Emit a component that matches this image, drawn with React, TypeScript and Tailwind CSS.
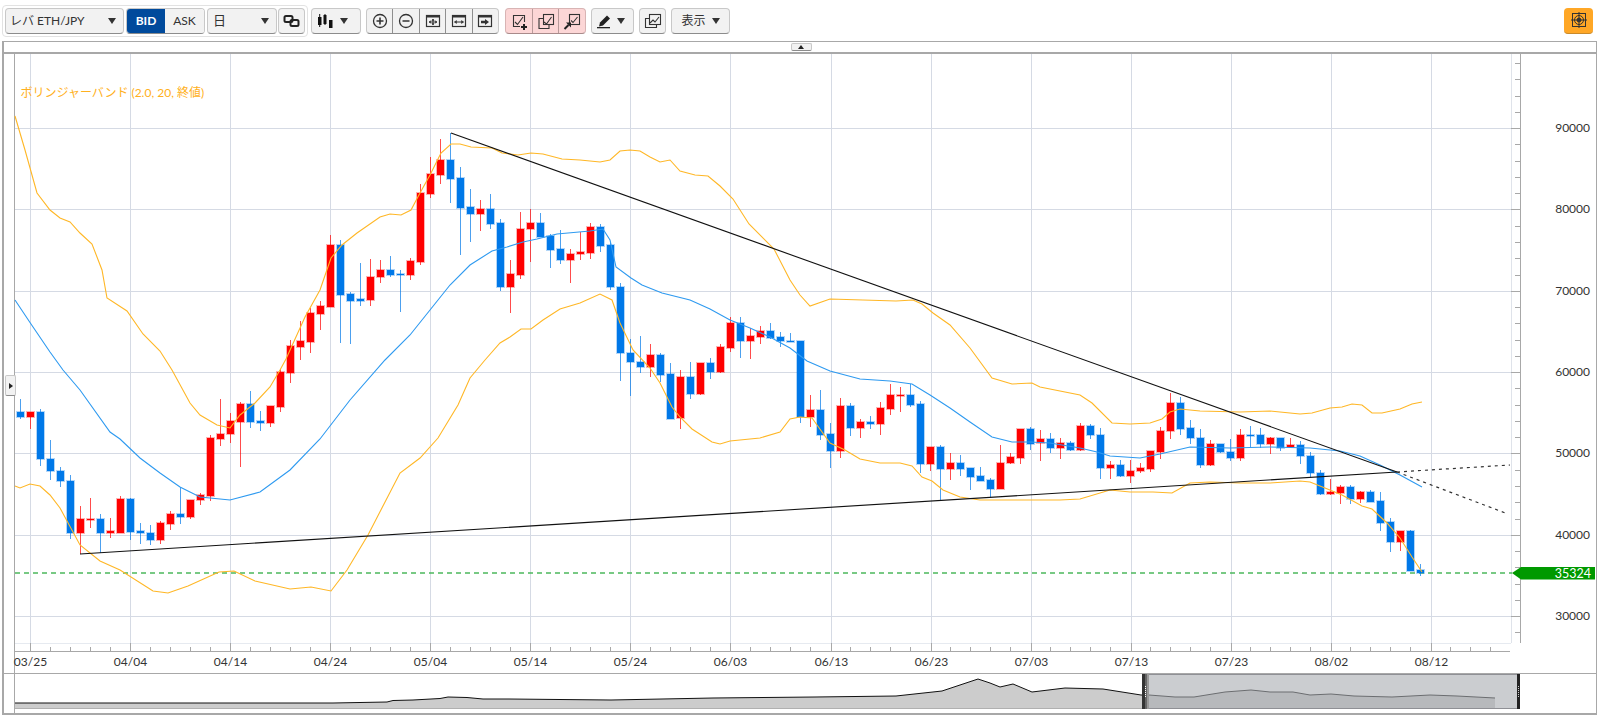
import React from 'react';

const FONT = { fontFamily: 'Lato, "Noto Sans CJK JP", sans-serif' };

// [wickTop, wickBottom, bodyTop, bodyBottom, red?] - one per day, 10px apart, starts at x=20
const candles: [number, number, number, number, number][] = [
  [399, 419, 412, 417, 0], [412, 429, 412, 417, 1], [409, 466, 412, 459, 0], [440, 480, 459, 471, 0],
  [467, 487, 471, 481, 0], [475, 539, 481, 533, 0], [506, 554, 519, 533, 1], [498, 528, 519, 520, 1],
  [514, 553, 519, 533, 0], [518, 538, 531, 533, 1], [496, 533, 499, 533, 1], [498, 540, 499, 532, 0],
  [523, 544, 531, 533, 0], [525, 545, 533, 540, 0], [521, 544, 523, 540, 1], [511, 530, 514, 524, 1],
  [487, 524, 514, 517, 0], [500, 519, 500, 517, 1], [493, 505, 495, 500, 1], [435, 501, 438, 496, 1],
  [399, 446, 434, 439, 1], [413, 443, 421, 434, 1], [402, 467, 404, 422, 1], [391, 428, 404, 422, 0],
  [411, 431, 421, 423, 0], [406, 427, 406, 423, 1], [369, 412, 372, 407, 1], [340, 383, 346, 373, 1],
  [321, 360, 341, 347, 1], [308, 353, 313, 342, 1], [301, 330, 306, 314, 1], [235, 307, 245, 307, 1],
  [240, 343, 245, 295, 0], [292, 344, 294, 301, 0], [263, 306, 299, 301, 0], [259, 306, 277, 300, 1],
  [260, 283, 270, 277, 1], [256, 277, 270, 275, 0], [270, 312, 274, 275, 0], [258, 280, 261, 275, 1],
  [184, 265, 193, 262, 1], [157, 198, 174, 194, 1], [139, 184, 160, 175, 1], [133, 203, 160, 179, 0],
  [167, 255, 178, 208, 0], [189, 242, 207, 214, 0], [200, 231, 209, 214, 1], [194, 229, 209, 224, 0],
  [219, 291, 223, 287, 0], [260, 313, 274, 287, 1], [212, 279, 229, 275, 1], [209, 262, 223, 229, 1],
  [213, 237, 223, 237, 0], [234, 268, 236, 250, 0], [230, 264, 249, 260, 0], [249, 283, 254, 260, 1],
  [232, 260, 252, 254, 1], [223, 259, 227, 253, 1], [224, 252, 227, 246, 0], [243, 290, 245, 287, 0],
  [283, 381, 287, 353, 0], [339, 396, 353, 362, 0], [336, 373, 362, 367, 0], [344, 377, 355, 367, 1],
  [353, 382, 355, 375, 0], [363, 419, 374, 419, 0], [370, 429, 377, 418, 1], [362, 399, 377, 394, 0],
  [363, 395, 363, 394, 1], [358, 379, 363, 372, 0], [344, 373, 347, 372, 1], [317, 352, 323, 348, 1],
  [317, 358, 323, 341, 0], [328, 359, 336, 341, 1], [326, 344, 331, 337, 1], [323, 339, 331, 338, 0],
  [332, 347, 337, 341, 0], [333, 342, 341, 342, 0], [341, 423, 341, 417, 0], [395, 427, 410, 417, 1],
  [390, 440, 410, 435, 0], [423, 468, 434, 451, 0], [398, 458, 406, 451, 1], [403, 436, 406, 428, 0],
  [419, 438, 422, 428, 1], [416, 429, 422, 424, 0], [402, 435, 408, 424, 1], [384, 415, 395, 409, 1],
  [387, 412, 395, 396, 1], [384, 407, 395, 405, 0], [401, 473, 404, 464, 0], [447, 471, 447, 464, 1],
  [445, 500, 447, 469, 0], [453, 480, 463, 469, 1], [455, 476, 463, 469, 0], [468, 490, 468, 477, 0],
  [467, 481, 476, 481, 0], [478, 497, 480, 489, 0], [445, 489, 463, 489, 1], [453, 464, 457, 463, 1],
  [429, 464, 429, 458, 1], [427, 450, 429, 444, 0], [430, 461, 439, 443, 1], [433, 453, 439, 448, 0],
  [438, 459, 443, 448, 1], [441, 451, 443, 450, 0], [423, 451, 426, 450, 1], [424, 439, 426, 435, 0],
  [428, 479, 435, 468, 0], [461, 479, 465, 468, 1], [460, 477, 465, 476, 0], [460, 483, 471, 476, 1],
  [463, 473, 468, 471, 1], [451, 472, 451, 469, 1], [427, 459, 431, 452, 1], [393, 439, 403, 431, 1],
  [397, 435, 403, 429, 0], [420, 444, 428, 438, 0], [429, 468, 438, 465, 0], [440, 466, 444, 465, 1],
  [444, 453, 444, 452, 0], [439, 461, 452, 458, 0], [429, 461, 435, 458, 1], [426, 448, 435, 436, 0],
  [428, 448, 435, 444, 0], [437, 454, 438, 444, 1], [438, 451, 438, 448, 0], [438, 448, 445, 447, 1],
  [441, 464, 445, 456, 0], [452, 477, 456, 473, 0], [470, 495, 473, 494, 0], [479, 495, 492, 494, 1],
  [485, 504, 487, 493, 1], [485, 504, 487, 499, 0], [491, 503, 492, 499, 1], [490, 502, 492, 502, 0],
  [492, 531, 501, 523, 0], [518, 552, 522, 542, 0], [531, 551, 531, 542, 1], [530, 571, 531, 571, 0],
  [564, 576, 570, 573, 0],
];

const upperBand = '15,116 25,150 37,193 50,210 60,218 70,222 80,233 92,244 102,270 107,298 127,311 143,334 160,351 172,370 190,403 200,415 217,425 230,428 240,415 255,403 270,387 280,370 286,359 305,317 320,290 331,258 342,245 357,233 380,217 390,214 401,215 411,210 420,193 430,175 441,153 451,144 460,144 471,147 492,148 502,153 518,155 531,153 543,154 562,159 580,160 600,162 610,160 620,151 630,150 640,151 650,157 660,162 670,160 680,171 695,175 708,176 720,186 733,199 749,224 774,249 790,280 800,295 810,306 830,299 896,301 913,300 922,304 933,313 950,325 970,348 992,378 1012,384 1032,383 1040,387 1080,395 1092,403 1112,423 1130,424 1150,423 1162,419 1170,412 1180,409 1200,411 1240,412 1270,411 1280,412 1300,414 1312,413 1330,408 1342,407 1352,404 1362,405 1372,413 1382,413 1400,409 1412,404 1422,402';
const middleBand = '15,300 31,324 50,352 63,370 80,390 110,432 120,439 140,458 160,473 180,487 200,497 230,500 260,492 290,470 320,439 350,400 385,360 410,335 430,310 450,285 470,265 492,251 507,247 523,242 537,239 557,234 590,231 603,229 610,240 616,267 631,278 642,285 662,293 690,300 710,309 730,320 750,328 770,337 790,348 807,361 830,371 860,379 890,381 912,384 930,395 950,408 970,422 992,437 1012,442 1030,442 1050,443 1080,448 1097,452 1110,456 1140,458 1160,454 1190,447 1230,448 1270,447 1310,448 1340,451 1360,456 1380,465 1400,475 1422,487';
const lowerBand = '15,486 20,488 30,484 40,486 50,495 60,508 80,545 100,561 120,570 153,591 168,593 188,586 219,572 234,571 255,581 290,589 311,587 331,591 347,570 368,535 400,473 420,458 438,438 458,405 470,378 485,360 500,343 510,337 521,329 531,329 543,320 560,309 580,303 600,294 612,300 620,323 633,350 650,368 660,383 672,407 680,417 692,429 712,442 720,444 730,441 760,438 780,432 790,419 800,417 812,418 830,443 845,450 860,459 880,463 900,463 912,466 922,477 932,481 943,490 960,497 980,500 1020,500 1060,500 1080,499 1110,490 1130,492 1153,492 1172,493 1190,483 1210,482 1240,483 1270,483 1300,481 1310,482 1325,488 1342,495 1362,506 1372,509 1387,523 1400,538 1412,557 1422,572';

const navLine = '15,703 333,703 387,702 393,700.5 413,700 440,698.5 448,697 467,697.5 483,699 509,699 611,700 713,698 815,697 896,696 942,691 960,685 978,679 990,683 1000,687 1013,684 1032,692 1065,688 1103,689 1141,695 1149,695 1175,697 1194,697 1225,692 1251,690 1270,692 1293,692 1310,695 1331,694 1354,696 1392,697 1430,695 1457,696 1495,698';

const gridX = [30.5, 130.5, 230.5, 330.5, 430.5, 530.5, 630.5, 730.5, 831.5, 931.5, 1031.5, 1131.5, 1231.5, 1331.5, 1431.5];
const dateLabels = ['03/25', '04/04', '04/14', '04/24', '05/04', '05/14', '05/24', '06/03', '06/13', '06/23', '07/03', '07/13', '07/23', '08/02', '08/12'];
const prices = [
  { y: 128.5, label: '90000' }, { y: 209.5, label: '80000' }, { y: 291.5, label: '70000' },
  { y: 372.5, label: '60000' }, { y: 453.5, label: '50000' }, { y: 535.5, label: '40000' }, { y: 616.5, label: '30000' },
];

const Caret = ({ className = '' }: { className?: string }) => (
  <span className={`w-0 h-0 border-x-[4px] border-x-transparent border-t-[6px] border-t-[#333] ${className}`} />
);

const ICON = { width: 20, height: 20, viewBox: '0 0 20 20', fill: 'none', stroke: '#333' };

const PlusCircle = () => (
  <svg {...ICON} strokeWidth={1.3}><circle cx="10" cy="10" r="6.5" /><path d="M6.5 10h7M10 6.5v7" strokeWidth={1.6} /></svg>
);
const MinusCircle = () => (
  <svg {...ICON} strokeWidth={1.3}><circle cx="10" cy="10" r="6.5" /><path d="M6.5 10h7" strokeWidth={1.6} /></svg>
);
const WindowFrame = ({ children }: { children: React.ReactNode }) => (
  <svg {...ICON} strokeWidth={1.2}>
    <rect x="3.5" y="4.5" width="13" height="11" />
    <rect x="3" y="4" width="14" height="2.5" fill="#333" stroke="none" />
    {children}
  </svg>
);
const ChartBox = ({ children }: { children?: React.ReactNode }) => (
  <svg {...ICON} strokeWidth={1.1}>
    {children}
  </svg>
);

const Segment = ({ children, last, pink }: { children: React.ReactNode; last?: boolean; pink?: boolean }) => (
  <div className={`flex-1 h-full flex items-center justify-center ${last ? '' : pink ? 'border-r border-[#b89a9a]' : 'border-r border-[#8f8f8f]'}`}>
    {children}
  </div>
);

const Btn = ({ className = '', children }: { className?: string; children: React.ReactNode }) => (
  <div className={`h-[26px] flex items-center rounded-[4px] border border-[#c8c8c8] border-b-[#8c8c8c] bg-[#f2f2f2] ${className}`}>
    {children}
  </div>
);

const Toolbar = () => (
  <div className="h-[41px] flex items-center pl-[2px] pr-[4px] text-[12px] text-[#333]" style={FONT}>
    <div className="h-[32px] flex items-center gap-[2px] px-[2px] rounded-[4px] border border-[#e2e2e2]">
      <Btn className="w-[119px] justify-between pl-[4px] pr-[7px]">
        <span>レバ ETH/JPY</span>
        <Caret />
      </Btn>
      <div className="h-[26px] flex rounded-[4px] border border-[#c8c8c8] border-b-[#8c8c8c] overflow-hidden font-bold">
        <div className="w-[38px] flex items-center justify-center bg-[#004a9c] text-white">BID</div>
        <div className="w-[39px] flex items-center justify-center bg-[#f2f2f2] font-normal">ASK</div>
      </div>
      <Btn className="w-[70px] justify-between pl-[5px] pr-[7px]">
        <span className="text-[13px]">日</span>
        <Caret />
      </Btn>
      <Btn className="w-[27px] -ml-[1px] justify-center">
        <svg width="17" height="14" viewBox="0 0 17 14" fill="none" stroke="#222" strokeWidth={2}>
          <rect x="1.5" y="2" width="8" height="6" rx="1.5" />
          <rect x="7.5" y="6" width="8" height="6" rx="1.5" />
        </svg>
      </Btn>
    </div>
    <Btn className="w-[50px] ml-[3px] pl-[5px] pr-[12px] justify-between">
      <svg width="16" height="14" viewBox="0 0 16 14" fill="#111">
        <rect x="1" y="3" width="3.5" height="8" /><rect x="2.2" y="0" width="1" height="13" />
        <rect x="6.5" y="1" width="3" height="9" /><rect x="7.5" y="0" width="1" height="11" />
        <rect x="12" y="6" width="3.5" height="8" />
      </svg>
      <Caret />
    </Btn>
    <div className="h-[26px] w-[133px] ml-[5px] flex rounded-[4px] border border-[#c8c8c8] border-b-[#8c8c8c] bg-[#f2f2f2] overflow-hidden">
      <Segment><PlusCircle /></Segment>
      <Segment><MinusCircle /></Segment>
      <Segment>
        <WindowFrame>
          <path d="M6 11h8M10 8v6" strokeWidth={1} />
          <path d="M6 11l1.5-1.2v2.4zM14 11l-1.5-1.2v2.4zM10 8l-1.2 1.5h2.4zM10 14l-1.2-1.5h2.4z" fill="#333" strokeWidth={0.5} />
        </WindowFrame>
      </Segment>
      <Segment>
        <WindowFrame>
          <path d="M5.5 11h9" strokeWidth={1} />
          <path d="M5.5 11l2-1.5v3zM14.5 11l-2-1.5v3z" fill="#333" strokeWidth={0.5} />
        </WindowFrame>
      </Segment>
      <Segment last>
        <WindowFrame>
          <path d="M6 9.8h4V8l4 3-4 3v-1.8H6z" fill="#333" stroke="none" />
        </WindowFrame>
      </Segment>
    </div>
    <div className="h-[26px] w-[81px] ml-[6px] flex rounded-[4px] border border-[#d8b4b4] border-b-[#a88a8a] bg-[#fcd6d6] overflow-hidden">
      <Segment pink>
        <ChartBox>
          <path d="M11 15.5H4.5v-11h11V11" />
          <path d="M6 11l2.5 2.5L14 6" />
          <path d="M12 16h6M15 13v6" strokeWidth={2} stroke="#222" />
        </ChartBox>
      </Segment>
      <Segment pink>
        <ChartBox>
          <rect x="7.5" y="3.5" width="10" height="10" />
          <path d="M7.5 7.5h-4.5v10h10v-4" />
          <path d="M8 11l2.5 2 5-7" />
        </ChartBox>
      </Segment>
      <Segment pink last>
        <ChartBox>
          <rect x="7.5" y="3.5" width="10" height="10" />
          <path d="M9 9.5l2 2 4.5-5.5" />
          <path d="M2.5 18l4-4" strokeWidth={2} stroke="#222" />
          <path d="M4 11.5h5v5z" fill="#222" stroke="none" />
        </ChartBox>
      </Segment>
    </div>
    <Btn className="w-[43px] ml-[5px] justify-between pl-[5px] pr-[8px]">
      <svg width="16" height="17" viewBox="0 0 16 17" fill="#222">
        <path d="M3 10.5l7-7 3 3-7 7-4 1z" />
        <rect x="0" y="15" width="13" height="1.3" />
      </svg>
      <Caret />
    </Btn>
    <Btn className="w-[27px] ml-[5px] justify-center">
      <ChartBox>
        <rect x="6.5" y="3.5" width="11" height="10" />
        <path d="M6.5 7.5h-4v9h11v-3" />
        <path d="M7 12l3-3 2 2 4-5" />
      </ChartBox>
    </Btn>
    <Btn className="w-[59px] ml-[5px] justify-center gap-[6px]">
      <span>表示</span>
      <Caret />
    </Btn>
    <div className="ml-auto w-[29px] h-[26px] flex items-center justify-center rounded-[4px] bg-[#ffa726] border-b border-[#c98a2a]">
      <svg width="16" height="16" viewBox="0 0 16 16" fill="none" stroke="#333" strokeWidth={1}>
        <rect x="1.5" y="1.5" width="13" height="13" />
        <circle cx="8" cy="8" r="4.5" />
        <circle cx="8" cy="8" r="2" fill="#333" />
        <path d="M8 0v16M0 8h16" />
      </svg>
    </div>
  </div>
);

const Chart = () => {
  const ticks: number[] = [];
  for (let i = 0; i < 36; i++) ticks.push(63 + i * 16.27);
  const minorX: number[] = [];
  for (let x = 50; x < 1510; x += 20) if ((x - 30) % 100 !== 0) minorX.push(x + 0.5);

  return (
    <svg width="1592" height="620" viewBox="4 54 1592 620" className="block" style={FONT}>
      {/* grid */}
      {gridX.map((x) => (
        <line key={x} x1={x} x2={x} y1={54} y2={652} stroke="#d5dae4" />
      ))}
      <line x1={1511.5} x2={1511.5} y1={54} y2={643} stroke="#dfe3ea" />
      {prices.map((p) => (
        <line key={p.y} x1={15} x2={1511} y1={p.y} y2={p.y} stroke="#d5dae4" />
      ))}
      <line x1={15} x2={1511} y1={643.5} y2={643.5} stroke="#e6eaf0" />

      {/* axes */}
      <line x1={14.5} x2={14.5} y1={54} y2={674} stroke="#a8a8a8" />
      <line x1={1520.5} x2={1520.5} y1={54} y2={643} stroke="#a8a8a8" />
      <line x1={15} x2={1510} y1={651.5} y2={651.5} stroke="#a8a8a8" />
      <line x1={4} x2={1596} y1={673.5} y2={673.5} stroke="#a8a8a8" />
      {ticks.map((y) => (
        <line key={y} x1={1515} x2={1520} y1={Math.round(y) + 0.5} y2={Math.round(y) + 0.5} stroke="#a8a8a8" />
      ))}
      {prices.map((p) => (
        <line key={p.label} x1={1511} x2={1520} y1={p.y} y2={p.y} stroke="#a8a8a8" />
      ))}
      {minorX.map((x) => (
        <line key={x} x1={x} x2={x} y1={647} y2={651} stroke="#a8a8a8" />
      ))}
      {gridX.map((x) => (
        <line key={x} x1={x} x2={x} y1={643} y2={651} stroke="#a8a8a8" />
      ))}

      {/* labels */}
      {prices.map((p) => (
        <text key={p.label} x={1590} y={p.y + 3.5} textAnchor="end" fontSize={12} fill="#333">{p.label}</text>
      ))}
      {gridX.map((x, i) => (
        <text key={x} x={x} y={666} textAnchor="middle" fontSize={12} fill="#333">{dateLabels[i]}</text>
      ))}
      <text x={20.5} y={97} fontSize={12} fill="#ffb020">ボリンジャーバンド (2.0, 20, 終値)</text>

      {/* current price line */}
      <line x1={15} x2={1512} y1={573} y2={573} stroke="#4cb85c" strokeWidth={1.3} strokeDasharray="5 4" />

      {/* candles */}
      {candles.map(([wt, wb, bt, bb, red], i) => {
        const x = 20 + i * 10;
        const color = red ? '#ff0000' : '#0078e8';
        return (
          <g key={i}>
            <rect x={x} y={wt} width={1} height={wb - wt} fill={color} opacity={0.7} />
            <rect x={x - 4} y={bt - 1} width={9} height={bb - bt + 2} fill={color} opacity={0.3} />
            <rect x={x - 3} y={bt} width={7} height={Math.max(bb - bt, 1)} fill={color} />
          </g>
        );
      })}

      {/* bollinger */}
      <polyline points={upperBand} fill="none" stroke="#ffb726" strokeWidth={1.1} />
      <polyline points={lowerBand} fill="none" stroke="#ffb726" strokeWidth={1.1} />
      <polyline points={middleBand} fill="none" stroke="#2e9af0" strokeWidth={1.1} />

      {/* trend lines */}
      <polyline points="80,554 1397,472" fill="none" stroke="#111" strokeWidth={1.1} />
      <polyline points="451,133 1397,472" fill="none" stroke="#111" strokeWidth={1.1} />
      <line x1={1397} y1={472} x2={1510} y2={465} stroke="#333" strokeWidth={1.2} strokeDasharray="3 4" />
      <line x1={1397} y1={472} x2={1508} y2={514} stroke="#333" strokeWidth={1.2} strokeDasharray="3 4" />

      {/* price tag */}
      <polygon points="1512,573 1521,567 1595,567 1595,579.5 1521,579.5" fill="#009900" />
      <text x={1591} y={577.5} textAnchor="end" fontSize={12.5} fill="#fff">35324</text>
    </svg>
  );
};

const Navigator = () => (
  <svg width="1592" height="39" viewBox="4 674 1592 39" className="block">
    <line x1={14.5} x2={14.5} y1={674} y2={713} stroke="#a8a8a8" />
    <polygon points={`15,708 ${navLine} 1495,708`} fill="#cccccc" />
    <polyline points={navLine} fill="none" stroke="#111" strokeWidth={1} />
    <line x1={15} x2={1142} y1={708.5} y2={708.5} stroke="#b0b0b0" />
    <rect x={1142} y={674} width={378} height={35} fill="#a9abb0" opacity={0.6} />
    <rect x={1142} y={674} width={378} height={1} fill="#8f9095" />
    <rect x={1142} y={708} width={378} height={1} fill="#8f9095" />
    <rect x={1142} y={674} width={3} height={35} fill="#333" />
    <rect x={1145} y={674} width={2} height={35} fill="#666" />
    <rect x={1147} y={674} width={2} height={35} fill="#999" />
    <line x1={1145.5} x2={1145.5} y1={686} y2={698} stroke="#fff" strokeDasharray="1 1" />
    <rect x={1517} y={674} width={3} height={35} fill="#222" />
    <line x1={1518.5} x2={1518.5} y1={686} y2={698} stroke="#ccc" strokeDasharray="1 1" />
  </svg>
);

export default function App() {
  return (
    <div className="w-[1597px] h-[715px] bg-white overflow-hidden">
      <Toolbar />
      <div className="relative ml-[2px] w-[1595px] h-[674px] bg-white border-l-2 border-r border-b-2 border-t border-[#a8a8a8]">
        <div className="h-[10px] flex justify-center">
          <div className="mt-[1px] w-[21px] h-[8px] flex items-center justify-center rounded-[2px] border border-[#c8c8c8] border-b-[#8c8c8c] bg-[#f2f2f2] translate-x-[1px]">
            <span className="w-0 h-0 border-x-[3px] border-x-transparent border-b-[4px] border-b-[#222]" />
          </div>
        </div>
        <div className="h-[2px] bg-[#a8a8a8]" />
        <Chart />
        <Navigator />
        <div className="absolute left-[1px] top-[333px] w-[11px] h-[21px] flex items-center justify-center rounded-[2px] border border-[#c8c8c8] border-b-[#8c8c8c] bg-[#f2f2f2]">
          <span className="w-0 h-0 border-y-[3px] border-y-transparent border-l-[4px] border-l-[#222]" />
        </div>
      </div>
    </div>
  );
}
